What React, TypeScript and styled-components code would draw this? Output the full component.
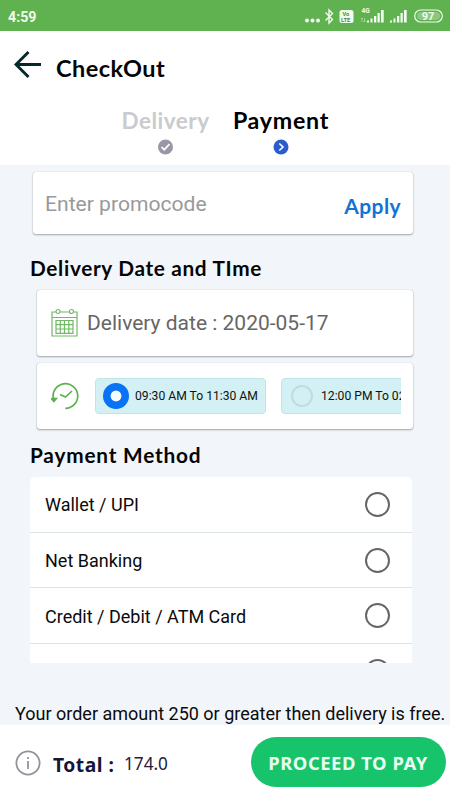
import React from "react";
import styled, { createGlobalStyle } from "styled-components";

const Global = createGlobalStyle`
  * { box-sizing: border-box; }
  body { margin: 0; font-family: Roboto, sans-serif; color: #0b0b0b; }
`;

const Screen = styled.div`
  width: 450px;
  height: 800px;
  display: flex;
  flex-direction: column;
  overflow: hidden;
  background: #fff;
  white-space: nowrap;
`;

const StatusBar = styled.div`
  height: 31px;
  flex: none;
  background: #60b250;
  color: #f1fbef;
  display: flex;
  align-items: center;
  justify-content: space-between;
  padding: 1px 7px 0 8px;
`;

const Clock = styled.span`
  padding-top: 1px;
  font-size: 14.2px;
  font-weight: 700;
  line-height: 30px;
`;

const Header = styled.header`
  height: 134px;
  flex: none;
  display: flex;
  flex-direction: column;
  font-family: Lato, sans-serif;
`;

const TitleRow = styled.div`
  display: flex;
  height: 70px;
  padding: 19px 0 0 14px;
  gap: 14px;
`;

const Title = styled.h1`
  margin: 2px 0 0;
  font-size: 23.5px;
  line-height: 32px;
  font-weight: 700;
  letter-spacing: 0.45px;
  color: #050505;
`;

const Steps = styled.div`
  display: flex;
  padding: 3px 0 0 121px;
  gap: 22px;
`;

const Step = styled.div<{ $active?: boolean; $width: number }>`
  width: ${(p) => p.$width}px;
  display: flex;
  flex-direction: column;
  align-items: center;
  gap: 2px;
  font-size: ${(p) => (p.$active ? 23.2 : 22.5)}px;
  line-height: 33px;
  font-weight: 700;
  letter-spacing: ${(p) => (p.$active ? 0.75 : 0.5)}px;
  color: ${(p) => (p.$active ? "#000" : "#c9cbcf")};
`;

const Content = styled.main`
  height: 560px;
  flex: none;
  background: #f2f6fa;
  padding: 7px 37px 0 30px;
  display: flex;
  flex-direction: column;
`;

const Card = styled.section<{ $height: number; $inset: number }>`
  height: ${(p) => p.$height}px;
  flex: none;
  margin-left: ${(p) => p.$inset}px;
  background: #fff;
  border-radius: 3px;
  box-shadow: 0 1px 2px rgba(40, 50, 55, 0.4), 0 0 1px rgba(40, 50, 55, 0.25);
  display: flex;
  align-items: center;
`;

const DateCard = styled(Card)`
  margin-top: 5px;
`;

const SlotCard = styled(Card)`
  margin-top: 7px;
`;

const Placeholder = styled.span`
  flex: 1;
  padding-left: 12px;
  font-size: 21.1px;
  color: #999;
`;

const Apply = styled.span`
  margin: 4px 12px 0 0;
  font: 700 21px Lato, sans-serif;
  letter-spacing: 0.4px;
  color: #1273d3;
`;

const Heading = styled.h2<{ $top: number; $space: number }>`
  margin: ${(p) => p.$top}px 0 0;
  height: 34px;
  flex: none;
  font: 700 20.8px/34px Lato, sans-serif;
  letter-spacing: ${(p) => p.$space}px;
  color: #050505;
`;

const DateText = styled.span`
  margin-left: 9px;
  font-size: 21px;
  color: #666;
`;

const Slots = styled.div`
  width: 306px;
  margin-left: 14px;
  display: flex;
  gap: 15px;
  overflow: hidden;
`;

const Slot = styled.div`
  flex: none;
  width: 171px;
  height: 36px;
  padding-left: 7px;
  display: flex;
  align-items: center;
  gap: 6px;
  border: 1px solid #bfe6e4;
  border-radius: 4px;
  background: #d3f0f5;
  font-size: 12.15px;
  color: #101010;
`;

const SlotRadio = styled.span<{ $selected?: boolean }>`
  flex: none;
  width: ${(p) => (p.$selected ? 26 : 22)}px;
  height: ${(p) => (p.$selected ? 26 : 22)}px;
  margin: 0 ${(p) => (p.$selected ? 0 : 2)}px;
  border-radius: 50%;
  border: ${(p) => (p.$selected ? "none" : "2px solid #bddde1")};
  background: ${(p) =>
    p.$selected
      ? "radial-gradient(circle, #f4fcff 5px, #0873f5 5.8px)"
      : "transparent"};
`;

const Methods = styled.div`
  width: 382px;
  height: 186px;
  flex: none;
  margin-top: 5px;
  border-radius: 5px 5px 0 0;
  overflow: hidden;
  background: #fff;
`;

const Method = styled.div`
  height: 55.7px;
  padding: 1px 22px 0 15px;
  display: flex;
  justify-content: space-between;
  align-items: center;
  border-bottom: 1px solid #dce3e6;
  font-size: 18px;
`;

const Radio = styled.span`
  width: 25px;
  height: 25px;
  margin-top: -1px;
  margin-left: auto;
  border: 2px solid #666;
  border-radius: 50%;
`;

const Notice = styled.p`
  margin: 38px 0 0 -15px;
  font-size: 18px;
  line-height: 26px;
`;

const Footer = styled.footer`
  flex: 1;
  display: flex;
  padding: 12px 4px 0 15px;
`;

const InfoIcon = styled.svg`
  margin-top: 13px;
`;

const Total = styled.strong`
  margin: 14px 0 0 12px;
  width: 71px;
  font: 700 19.3px/28px "Noto Sans", sans-serif;
  letter-spacing: 0.5px;
  color: #171538;
`;

const Amount = styled.span`
  margin-top: 13px;
  flex: 1;
  font: 400 17.2px/28px "Noto Sans", sans-serif;
  color: #242138;
`;

const PayButton = styled.button`
  width: 195px;
  height: 50px;
  border: 0;
  border-radius: 25px;
  background: #17c46b;
  color: #e9fff2;
  font: 700 18.4px/28px "Noto Sans", sans-serif;
  letter-spacing: 0.55px;
  padding: 2px 1px 0 0;
`;

const StatusIcons = () => (
  <svg width="140" height="24" viewBox="303 4 140 24" fill="#f1fbef">
    <circle cx="307" cy="20.500" r="2" />
    <circle cx="312.500" cy="20.500" r="2" />
    <circle cx="318" cy="20.500" r="2" />
    <path d="M325.500 12.500l7 7-3.500 3.500v-13l3.500 3.500-7 7" fill="none" stroke="#f1fbef" strokeWidth="1.400" />
    <rect x="339.500" y="10" width="14" height="13" rx="2.500" />
    <g fontFamily="Roboto" fontWeight="700">
      <text x="342.500" y="15.800" fontSize="5.500" fill="#3f9034">Vo</text>
      <text x="341" y="22" fontSize="5.800" fill="#3f9034">LTE</text>
      <text x="361.500" y="13" fontSize="6.500">4G</text>
      <text x="421.800" y="20" fontSize="11">97</text>
    </g>
    <path d="M362 22v-4m-1 1l1-1 1 1M364.500 18v4m-1-1l1 1 1-1" fill="none" stroke="#b9dfb1" strokeWidth=".7" />
    <path d="M367 22.500v-2h2v2zM370.500 22.500v-4h2v4zM374 22.500v-6.500h2.300v6.500zM377.500 22.500v-9.500h2.300v9.500zM381 22.500V10h2.700v12.500z" />
    <path d="M390 22.500v-2h2v2zM393.500 22.500v-4h2v4zM397 22.500v-6.500h2.300v6.500zM400.500 22.500v-9.500h2.300v9.500zM404 22.500V10h2.700v12.500z" />
    <rect x="414.700" y="10" width="27.600" height="12" rx="6" fill="none" stroke="#f1fbef" strokeWidth="1.200" />
    <rect x="417" y="12" width="23" height="8" rx="4" fillOpacity=".3" />
  </svg>
);

const CardIcon = styled.svg`
  margin-left: 14px;
  flex: none;
`;

export default function App() {
  return (
    <Screen>
      <Global />
      <StatusBar>
        <Clock>4:59</Clock>
        <StatusIcons />
      </StatusBar>
      <Header>
        <TitleRow>
          <svg width="28" height="30" viewBox="0 0 28 30" fill="none" stroke="#05282b" strokeWidth="2.900">
            <path d="M27 14.500H2.500M14.500 2L2 14.500 14.500 27" />
          </svg>
          <Title>CheckOut</Title>
        </TitleRow>
        <Steps>
          <Step $width={89}>
            Delivery
            <svg width="16" height="16" viewBox="0 0 16 16">
              <circle cx="7.500" cy="8" r="7.500" fill="#9797a7" />
              <path d="M3.500 8l2.700 2.700 5.300-5.500" fill="none" stroke="#fff" strokeWidth="1.700" />
            </svg>
          </Step>
          <Step $active $width={98}>
            Payment
            <svg width="16" height="16" viewBox="0 0 16 16">
              <circle cx="8" cy="8" r="7.500" fill="#2b5cce" />
              <path d="M6.300 4.500L10 8l-3.700 3.500" fill="none" stroke="#fff" strokeWidth="1.600" />
            </svg>
          </Step>
        </Steps>
      </Header>
      <Content>
        <Card $height={62} $inset={3}>
          <Placeholder>Enter promocode</Placeholder>
          <Apply>Apply</Apply>
        </Card>
        <Heading $top={17} $space={0.66}>Delivery Date and TIme</Heading>
        <DateCard $height={66} $inset={7}>
          <CardIcon width="27" height="30" viewBox="0 0 27 30" fill="none" stroke="#72b965" strokeWidth="1.200">
            <path d="M5 4H1v24h25V4h-3M9 4h9M1 9.500h25M5 12.500h17v12.800H5zM9.300 12.500v12.800M13.500 12.500v12.800M17.800 12.500v12.800M5 16.700h17M5 21h17" />
            <circle cx="7" cy="3.500" r="2" />
            <circle cx="20.500" cy="3.500" r="2" />
          </CardIcon>
          <DateText>Delivery date : 2020-05-17</DateText>
        </DateCard>
        <SlotCard $height={66} $inset={7}>
          <CardIcon width="30" height="30" viewBox="0 0 30 30" fill="none" stroke="#5cb050" strokeWidth="1.700">
            <path d="M2.500 18A12.300 12.300 0 1 1 14.300 27.300" />
            <path d="M.3 17.500h5L2.900 20.500z" fill="#5cb050" />
            <path d="M9 13.500l5.500 2.500 6.500-6" />
          </CardIcon>
          <Slots>
            <Slot>
              <SlotRadio $selected />
              09:30 AM To 11:30 AM
            </Slot>
            <Slot>
              <SlotRadio />
              12:00 PM To 02:00 PM
            </Slot>
          </Slots>
        </SlotCard>
        <Heading $top={9} $space={0.8}>Payment Method</Heading>
        <Methods>
          <Method>Wallet / UPI<Radio /></Method>
          <Method>Net Banking<Radio /></Method>
          <Method>Credit / Debit / ATM Card<Radio /></Method>
          <Method><Radio /></Method>
        </Methods>
        <Notice>Your order amount 250 or greater then delivery is free.</Notice>
      </Content>
      <Footer>
        <InfoIcon width="26" height="26" viewBox="0 0 26 26" fill="none" stroke="#92939c" strokeWidth="1.800">
          <circle cx="13" cy="13" r="11.600" />
          <path d="M13 11v8M13 7v2" />
        </InfoIcon>
        <Total>Total :</Total>
        <Amount>174.0</Amount>
        <PayButton>PROCEED TO PAY</PayButton>
      </Footer>
    </Screen>
  );
}
